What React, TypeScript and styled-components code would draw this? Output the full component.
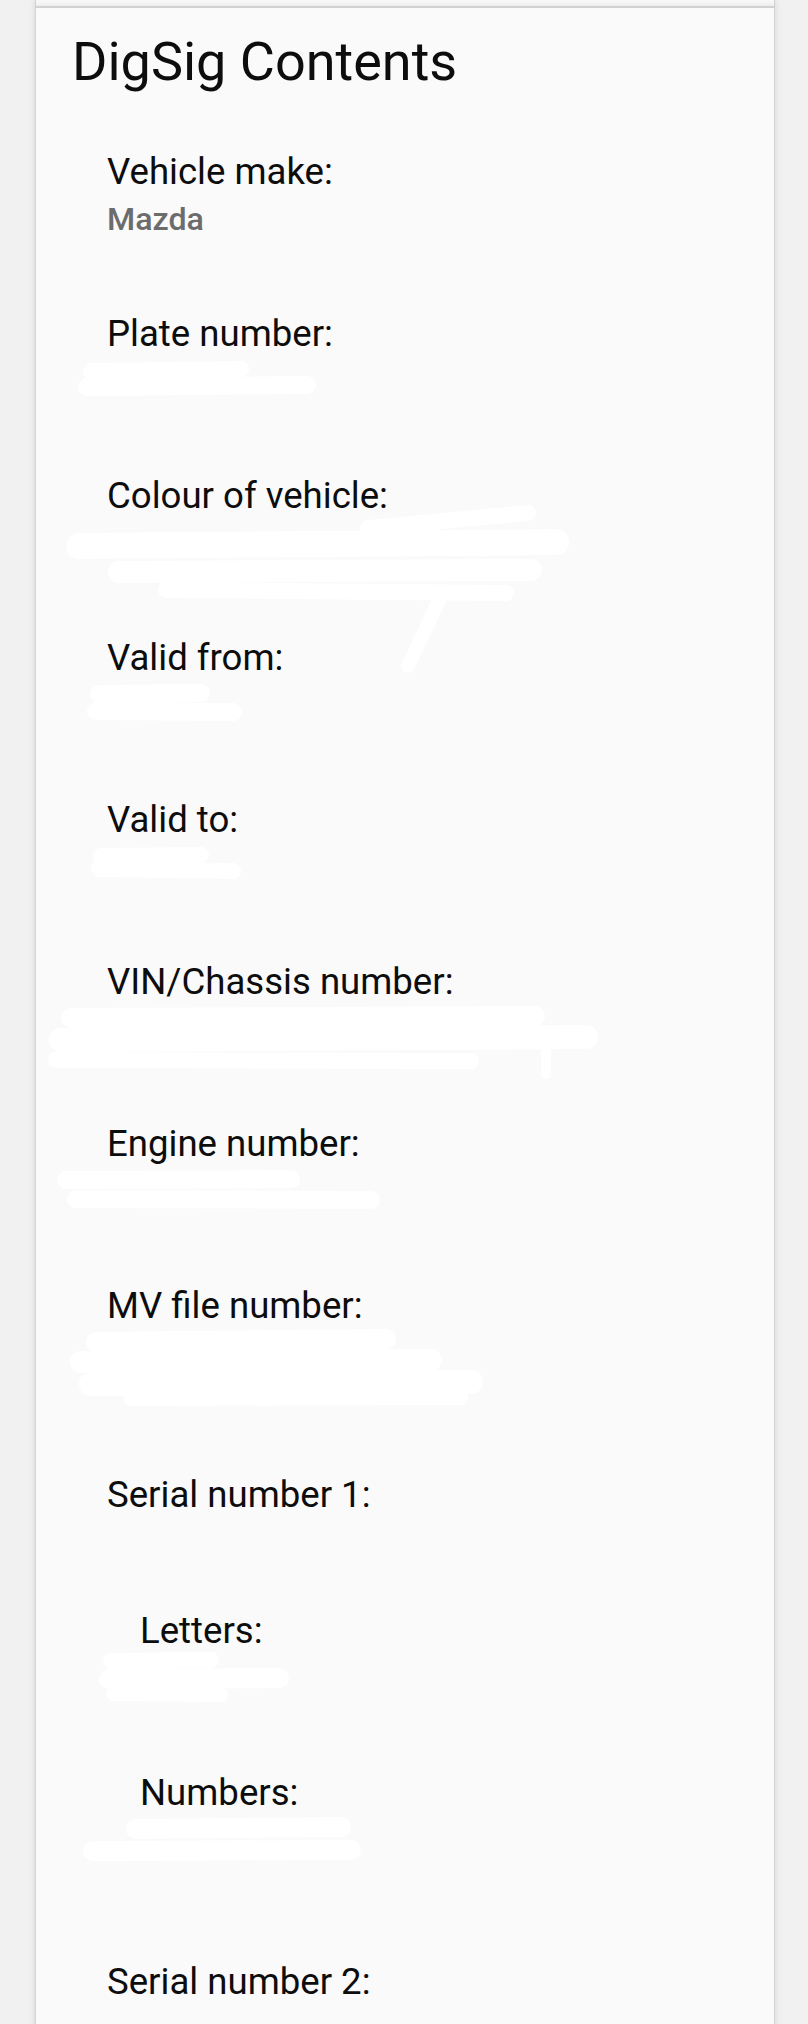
import React from 'react';
import styled, { createGlobalStyle } from 'styled-components';

const GlobalStyle = createGlobalStyle`
  body {
    margin: 0;
    background: #f1f1f1;
    font-family: Roboto, "Noto Sans", "Liberation Sans", sans-serif;
  }
`;

const Page = styled.div`
  display: flex;
  flex-direction: column;
  padding: 0 33px 0 35px;
`;

const CardEdge = `
  background: #fafafa;
  border-left: 1px solid #d3d3d3;
  border-right: 1px solid #d3d3d3;
  box-shadow: 0 0 7px rgba(0, 0, 0, 0.12);
`;

const PrevCard = styled.div`
  ${CardEdge}
  height: 6px;
`;

const Card = styled.section`
  ${CardEdge}
  border-top: 2px solid #d2d2d2;
  min-height: 2040px;
  padding: 21px 0 0 36px;
`;

const Title = styled.h2`
  margin: 0;
  font-size: 54px;
  line-height: 65px;
  font-weight: 400;
  color: #0d0d0d;
`;

const FieldList = styled.div`
  display: flex;
  flex-direction: column;
  margin-top: 54px;
  padding-left: 35px;
`;

const Field = styled.div`
  display: flex;
  flex-direction: column;
  margin-bottom: 68px;
`;

const Label = styled.div`
  font-size: 36.6px;
  line-height: 48px;
  color: #0d0d0d;
`;

const Value = styled.div`
  position: relative;
  height: 46px;
  font-size: 32.2px;
  line-height: 46px;
  font-weight: 500;
  color: #6c6c6c;
`;

const Smear = styled.svg`
  position: absolute;
  left: 0;
  top: 0;
  width: 1px;
  height: 1px;
  overflow: visible;
  pointer-events: none;
`;

const Group = styled.div`
  display: flex;
  flex-direction: column;
  margin-top: 27px;
`;

const GroupTitle = styled(Label)`
  margin-bottom: 88px;
`;

const GroupBody = styled.div`
  display: flex;
  flex-direction: column;
  padding-left: 33px;
`;

type Stroke = [string, number];

type Item = {
  label: string;
  value?: string;
  smear?: Stroke[];
};

const fields: Item[] = [
  { label: 'Vehicle make:', value: 'Mazda' },
  {
    label: 'Plate number:',
    smear: [
      ['M -16 13 L 134 11', 16],
      ['M -20 29 L 200 27', 18],
    ],
  },
  {
    label: 'Colour of vehicle:',
    smear: [
      ['M 261 8 L 421 -7', 16],
      ['M -28 26 L 449 22', 26],
      ['M 12 52 L 424 50', 22],
      ['M 59 70 L 399 73', 16],
      ['M 334 76 L 301 146', 14],
    ],
  },
  {
    label: 'Valid from:',
    smear: [
      ['M -8 12 L 94 11', 18],
      ['M -11 29 L 126 30', 18],
    ],
  },
  {
    label: 'Valid to:',
    smear: [
      ['M -6 12 L 94 11', 16],
      ['M -8 25 L 126 27', 16],
    ],
  },
  {
    label: 'VIN/Chassis number:',
    smear: [
      ['M -36 12 L 428 10', 20],
      ['M -46 34 L 479 31', 24],
      ['M -51 54 L 364 55', 16],
      ['M 439 34 L 439 68', 10],
    ],
  },
  {
    label: 'Engine number:',
    smear: [
      ['M -41 12 L 184 11', 18],
      ['M -31 31 L 264 32', 18],
    ],
  },
  {
    label: 'MV file number:',
    smear: [
      ['M -11 12 L 279 9', 20],
      ['M -26 32 L 324 30', 22],
      ['M -16 54 L 364 52', 24],
      ['M 24 69 L 354 68', 14],
    ],
  },
];

const serialOne: Item[] = [
  {
    label: 'Letters:',
    smear: [
      ['M -29 6 L 71 5', 16],
      ['M -31 24 L 139 23', 20],
      ['M -27 39 L 81 40', 14],
    ],
  },
  {
    label: 'Numbers:',
    smear: [
      ['M -4 12 L 201 10', 20],
      ['M -47 34 L 211 33', 20],
    ],
  },
];

const FieldRow: React.FC<{ item: Item }> = ({ item }) => (
  <Field>
    <Label>{item.label}</Label>
    <Value>
      {item.value}
      {item.smear && (
        <Smear aria-hidden="true">
          {item.smear.map(([d, w], i) => (
            <path
              key={i}
              d={d}
              stroke="#ffffff"
              strokeWidth={w}
              strokeLinecap="round"
              fill="none"
            />
          ))}
        </Smear>
      )}
    </Value>
  </Field>
);

const App: React.FC = () => {
  return (
    <>
      <GlobalStyle />
      <Page>
        <PrevCard />
        <Card>
          <Title>DigSig Contents</Title>
          <FieldList>
            {fields.map((f) => (
              <FieldRow key={f.label} item={f} />
            ))}
            <Group>
              <GroupTitle>Serial number 1:</GroupTitle>
              <GroupBody>
                {serialOne.map((f) => (
                  <FieldRow key={f.label} item={f} />
                ))}
              </GroupBody>
            </Group>
            <Group>
              <Label>Serial number 2:</Label>
            </Group>
          </FieldList>
        </Card>
      </Page>
    </>
  );
};

export default App;
